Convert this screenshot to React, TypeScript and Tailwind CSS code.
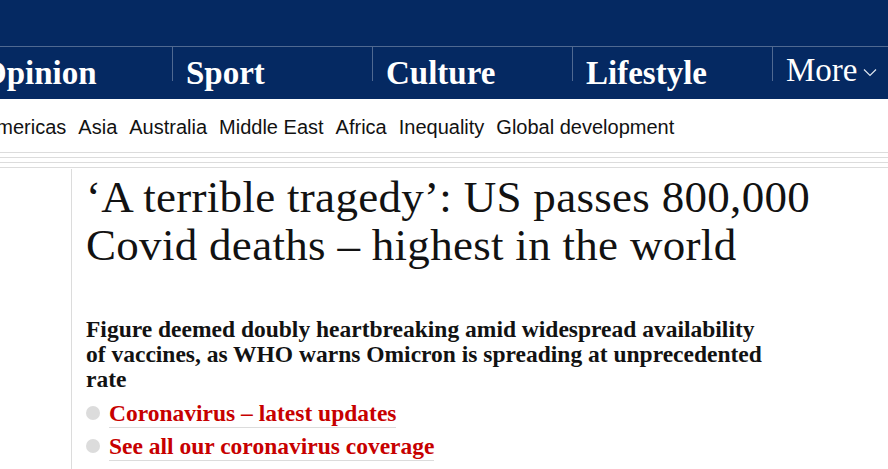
import React from 'react';

const pillars = [
  { label: 'Opinion', first: true },
  { label: 'Sport' },
  { label: 'Culture' },
  { label: 'Lifestyle' },
];

const subNav = ['Americas', 'Asia', 'Australia', 'Middle East', 'Africa', 'Inequality', 'Global development'];

const links = ['Coronavirus – latest updates', 'See all our coronavirus coverage'];

export default function App() {
  return (
    <div className="w-[888px] h-[469px] overflow-hidden bg-white text-[#121212]">
      {/* Top navy header */}
      <header className="bg-[#052962] h-[99px] flex flex-col">
        <div className="h-[46px]" />
        <nav className="border-t border-[#506991] flex ml-[-28px] h-[53px]">
          {pillars.map((p) => (
            <div
              key={p.label}
              className={`w-[200px] shrink-0 ${p.first ? 'pl-[9px]' : 'pl-[13px] border-l border-[#506991]'} h-[34px]`}
            >
              <span className="block text-white font-bold text-[33px] leading-[34px] mt-[9px] font-['Liberation_Serif',serif] whitespace-nowrap">
                {p.label}
              </span>
            </div>
          ))}
          <div className="w-[200px] shrink-0 pl-[13px] border-l border-[#506991] h-[34px] flex items-start">
            <span className="text-white text-[33px] leading-[34px] mt-[6px] font-['Liberation_Serif',serif]">More</span>
            <svg width="14" height="9" viewBox="0 0 14 9" className="ml-[6px] mt-[21px]" fill="none">
              <path d="M1 1.5 L7 7.5 L13 1.5" stroke="#dfe5ee" strokeWidth="1.2" />
            </svg>
          </div>
        </nav>
      </header>

      {/* Sub navigation */}
      <div className="h-[53px] flex items-center pt-[3px] ml-[-17px] gap-[12px] font-['Liberation_Sans',sans-serif] text-[20px] whitespace-nowrap">
        {subNav.map((s) => (
          <span key={s}>{s}</span>
        ))}
      </div>

      {/* Stacked rules */}
      <div className="flex flex-col gap-[4px]">
        <div className="h-px bg-[#dcdcdc]" />
        <div className="h-px bg-[#dcdcdc]" />
        <div className="h-px bg-[#dcdcdc]" />
        <div className="h-px bg-[#dcdcdc]" />
      </div>

      {/* Article */}
      <main className="ml-[71px] mt-[1px] border-l border-[#dcdcdc] pl-[14px] h-[400px]">
        <h1 className="font-['Liberation_Serif',serif] text-[45px] leading-[48px] tracking-[0.3px] pt-[4px] whitespace-nowrap">
          ‘A terrible tragedy’: US passes 800,000
          <br />
          Covid deaths – highest in the world
        </h1>

        <p className="mt-[48px] font-['Liberation_Serif',serif] font-bold text-[23.5px] leading-[25px] whitespace-nowrap">
          Figure deemed doubly heartbreaking amid widespread availability
          <br />
          of vaccines, as WHO warns Omicron is spreading at unprecedented
          <br />
          rate
        </p>

        <ul className="mt-[7px] flex flex-col gap-[4px]">
          {links.map((l) => (
            <li key={l} className="flex items-center">
              <span className="w-[14px] h-[14px] rounded-full bg-[#dcdcdc] mr-[9px] mt-[-2px] shrink-0" />
              <a className="font-['Liberation_Serif',serif] font-bold text-[23.5px] leading-[28px] text-[#c70000] border-b border-[#dcdcdc] whitespace-nowrap">
                {l}
              </a>
            </li>
          ))}
        </ul>
      </main>
    </div>
  );
}
